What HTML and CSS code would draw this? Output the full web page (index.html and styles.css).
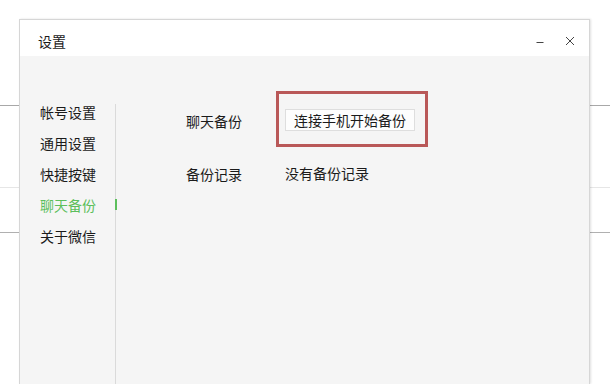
FILE: index.html
```html
<!DOCTYPE html>
<html lang="zh-CN">
<head>
<meta charset="utf-8">
<title>设置</title>
<link rel="stylesheet" href="styles.css">
</head>
<body>
<div class="window">
  <div class="titlebar">
    <span class="title">设置</span>
    <div class="controls">
      <span class="ctl">
        <svg width="10" height="10" viewBox="0 0 10 10"><path d="M1.5 6.5H8.5" stroke="#444" stroke-width="1"/></svg>
      </span>
      <span class="ctl">
        <svg width="10" height="10" viewBox="0 0 10 10"><path d="M1 1L9 9M9 1L1 9" stroke="#444" stroke-width="1"/></svg>
      </span>
    </div>
  </div>
  <div class="main">
    <nav class="sidebar">
      <div class="item">帐号设置</div>
      <div class="item">通用设置</div>
      <div class="item">快捷按键</div>
      <div class="item active">聊天备份</div>
      <div class="item">关于微信</div>
    </nav>
    <section class="content">
      <div class="row">
        <span class="label">聊天备份</span>
        <span class="highlight"><button class="btn">连接手机开始备份</button></span>
      </div>
      <div class="row">
        <span class="label">备份记录</span>
        <span class="value">没有备份记录</span>
      </div>
    </section>
  </div>
</div>
</body>
</html>
```
FILE: styles.css
```css
html, body {
  margin: 0;
  padding: 0;
}
body {
  width: 610px;
  height: 384px;
  overflow: hidden;
  background-color: #ffffff;
  background-image:
    linear-gradient(#a8a8a8, #a8a8a8),
    linear-gradient(#e6e6e6, #e6e6e6),
    linear-gradient(#b0b0b0, #b0b0b0);
  background-size: 100% 1px, 100% 1px, 100% 1px;
  background-position: 0 105px, 0 187px, 0 232px;
  background-repeat: no-repeat;
  font-family: "Noto Sans CJK SC", "Noto Sans", sans-serif;
  color: #1b1b1b;
  padding: 19px 0 0 19px;
  box-sizing: border-box;
}
.window {
  width: 571px;
  height: 365px;
  box-sizing: border-box;
  border: 1px solid #d6d6d6;
  border-bottom: none;
  background: #f5f5f5;
  box-shadow: 1px 0 2px rgba(0,0,0,0.12);
  display: flex;
  flex-direction: column;
}
.titlebar {
  height: 36px;
  flex: none;
  background: #ffffff;
  display: flex;
  align-items: flex-start;
  justify-content: space-between;
  box-sizing: border-box;
  padding: 13px 14px 0 18px;
}
.title {
  font-size: 14px;
  line-height: 16px;
  color: #1b1b1b;
}
.controls {
  display: flex;
  gap: 20px;
  padding-top: 3px;
}
.ctl {
  display: block;
  width: 10px;
  height: 10px;
}
.ctl svg {
  display: block;
}
.main {
  flex: 1;
  display: flex;
  align-items: stretch;
  min-height: 0;
}
.sidebar {
  width: 96px;
  box-sizing: border-box;
  margin-top: 48px;
  border-right: 1px solid #dadada;
  padding-left: 20px;
  display: flex;
  flex-direction: column;
  gap: 15px;
}
.item {
  font-size: 14px;
  line-height: 16px;
  color: #1b1b1b;
  position: relative;
}
.item.active {
  color: #5cbf5c;
}
.item.active::after {
  content: "";
  position: absolute;
  right: -2px;
  top: 2px;
  width: 2px;
  height: 11px;
  background: #5cbf5c;
}
.content {
  flex: 1;
  padding: 53px 0 0 70px;
  display: flex;
  flex-direction: column;
  gap: 31px;
}
.row {
  display: flex;
  align-items: center;
  height: 22px;
}
.label {
  width: 99px;
  font-size: 14px;
  line-height: 16px;
  padding-top: 2px;
}
.value {
  font-size: 14px;
  line-height: 16px;
}
.highlight {
  position: relative;
  display: block;
}
.highlight::before {
  content: "";
  position: absolute;
  left: -9px;
  right: -13px;
  top: -18px;
  bottom: -16px;
  border: 3px solid #b95858;
}
.btn {
  display: block;
  height: 22px;
  margin: 0;
  padding: 0 8px;
  border: 1px solid #dedede;
  background: #fdfdfd;
  font-family: "Noto Sans CJK SC", "Noto Sans", sans-serif;
  font-size: 14px;
  line-height: 20px;
  color: #1b1b1b;
}
```
